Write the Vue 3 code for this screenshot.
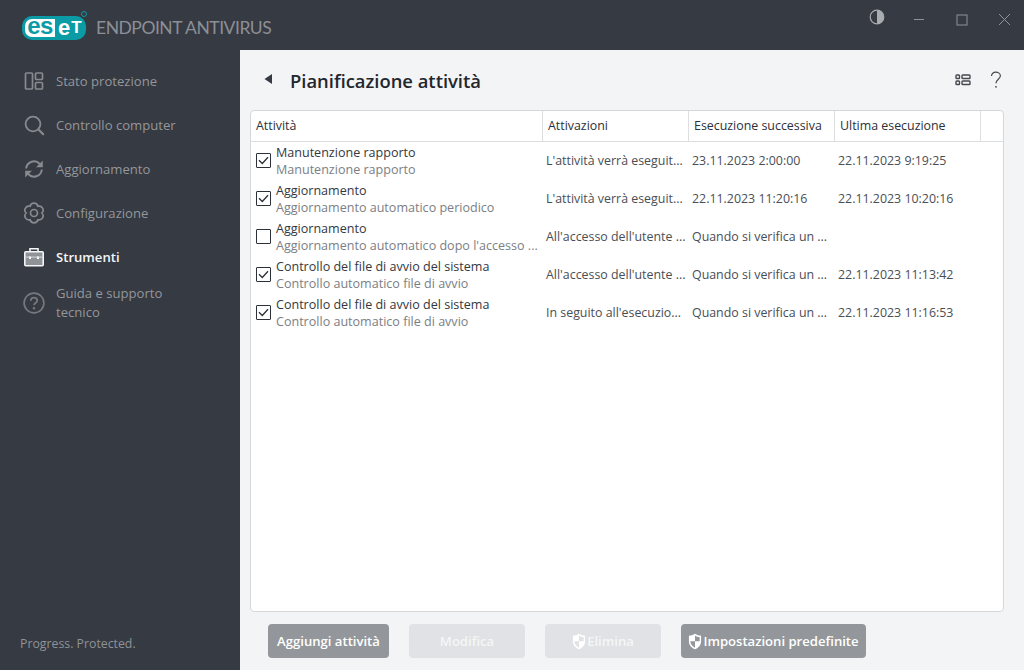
<script setup>
const nav = [
  { id: 'stato', label: 'Stato protezione' },
  { id: 'search', label: 'Controllo computer' },
  { id: 'sync', label: 'Aggiornamento' },
  { id: 'gear', label: 'Configurazione' },
  { id: 'tools', label: 'Strumenti', active: true },
  { id: 'help', label: 'Guida e supporto tecnico', tall: true }
]
const columns = ['Attività', 'Attivazioni', 'Esecuzione successiva', 'Ultima esecuzione', '']
const rows = [
  { on: true, title: 'Manutenzione rapporto', sub: 'Manutenzione rapporto', trig: "L'attività verrà eseguit...", next: '23.11.2023 2:00:00', last: '22.11.2023 9:19:25' },
  { on: true, title: 'Aggiornamento', sub: 'Aggiornamento automatico periodico', trig: "L'attività verrà eseguit...", next: '22.11.2023 11:20:16', last: '22.11.2023 10:20:16' },
  { on: false, title: 'Aggiornamento', sub: "Aggiornamento automatico dopo l'accesso ...", trig: "All'accesso dell'utente ...", next: 'Quando si verifica un ...', last: '' },
  { on: true, title: 'Controllo del file di avvio del sistema', sub: 'Controllo automatico file di avvio', trig: "All'accesso dell'utente ...", next: 'Quando si verifica un ...', last: '22.11.2023 11:13:42' },
  { on: true, title: 'Controllo del file di avvio del sistema', sub: 'Controllo automatico file di avvio', trig: "In seguito all'esecuzio...", next: 'Quando si verifica un ...', last: '22.11.2023 11:16:53' }
]
const buttons = [
  { label: 'Aggiungi attività', width: 121 },
  { label: 'Modifica', width: 116, off: true },
  { label: 'Elimina', width: 116, off: true, shield: true },
  { label: 'Impostazioni predefinite', width: 185, shield: true }
]
</script>

<template>
  <div class="app">
    <header class="titlebar">
      <div class="brand">
        <div class="logo">
          <span class="logo-es">es</span>
          <span class="logo-e">e</span>
          <span class="logo-t">T</span>
          <i class="reg"></i>
        </div>
        <span class="product">ENDPOINT ANTIVIRUS</span>
      </div>
      <div class="winctl">
        <svg class="ctl-contrast" width="16" height="16" viewBox="0 0 16 16"><circle cx="8" cy="8" r="6.800" fill="none" stroke="#a9acb0" stroke-width="1.200"/><path d="M8 1.200a6.800 6.800 0 0 1 0 13.600z" fill="#a9acb0"/></svg>
        <svg class="ctl-min" width="12" height="12" viewBox="0 0 12 12"><path d="M1 6.500h10" stroke="#8f9297" stroke-width="1"/></svg>
        <svg class="ctl-max" width="12" height="12" viewBox="0 0 12 12"><rect x="1" y="1" width="10" height="10" fill="none" stroke="#8f9297" stroke-width="1"/></svg>
        <svg class="ctl-close" width="13" height="13" viewBox="0 0 13 13"><path d="M1 1l11 11M12 1L1 12" stroke="#8f9297" stroke-width="1"/></svg>
      </div>
    </header>

    <div class="body">
      <aside class="sidebar">
        <nav class="nav">
          <div v-for="item in nav" :key="item.id" class="nav-item" :class="{ active: item.active, tall: item.tall }">
            <span class="nav-icon">
              <svg v-if="item.id === 'stato'" width="22" height="22" viewBox="0 0 22 22" fill="none" stroke="currentColor" stroke-width="1.700"><rect x="2.500" y="3" width="7" height="16" rx="1"/><rect x="12.500" y="3" width="7" height="6.500" rx="1"/><rect x="12.500" y="12.500" width="7" height="6.500" rx="1"/></svg>
              <svg v-else-if="item.id === 'search'" width="22" height="22" viewBox="0 0 22 22" fill="none" stroke="currentColor" stroke-width="1.800"><circle cx="10" cy="10" r="7.400"/><path d="M15.500 15.500l4.700 4.700" stroke-width="2.200" stroke-linecap="round"/></svg>
              <svg v-else-if="item.id === 'sync'" width="22" height="22" viewBox="0 0 22 22"><path d="M3.200 10.500A7.800 7.800 0 0 1 16.800 6" fill="none" stroke="currentColor" stroke-width="2"/><path d="M19.800 2.500v6.800H13z" fill="currentColor"/><path d="M18.800 11.500A7.800 7.800 0 0 1 5.200 16" fill="none" stroke="currentColor" stroke-width="2"/><path d="M2.200 19.500v-6.800H9z" fill="currentColor"/></svg>
              <svg v-else-if="item.id === 'gear'" width="22" height="22" viewBox="0 0 22 22" fill="none" stroke="currentColor" stroke-width="1.700"><path d="M14.900 4.250A4 4 0 0 1 18.800 11A4 4 0 0 1 14.900 17.750A4 4 0 0 1 7.100 17.750A4 4 0 0 1 3.200 11A4 4 0 0 1 7.100 4.250A4 4 0 0 1 14.900 4.250z"/><circle cx="11" cy="11" r="3.500"/></svg>
              <svg v-else-if="item.id === 'tools'" width="22" height="22" viewBox="0 0 22 22"><path d="M7 5.500V2.800h8v2.700" fill="none" stroke="#f4f5f6" stroke-width="1.600"/><rect x="1.800" y="5.800" width="18.400" height="14" rx="1" fill="#8f9297" stroke="#f4f5f6" stroke-width="1.600"/><path d="M2 10.500h18v1.200H2z" fill="#cfd1d3"/><path d="M6 10.500h2v2.500H6zM14 10.500h2v2.500h-2z" fill="#f4f5f6"/></svg>
              <svg v-else class="help" width="22" height="22" viewBox="0 0 22 22" fill="none" stroke="currentColor" stroke-width="1.700"><circle cx="11" cy="11" r="9.900"/><path d="M7.800 8.700c0-1.900 1.400-3.100 3.200-3.100s3.200 1.200 3.200 2.900c0 2.400-3.200 2.600-3.200 4.800" stroke-width="1.800"/><circle cx="11" cy="16.200" r="1.200" fill="currentColor" stroke="none"/></svg>
            </span>
            <span class="nav-label">{{ item.label }}</span>
          </div>
        </nav>
        <div class="slogan">Progress. Protected.</div>
      </aside>

      <main class="main">
        <div class="head">
          <svg class="back" width="10" height="12" viewBox="0 0 10 12"><path d="M9 1v10L1.500 6z" fill="#363a42"/></svg>
          <h1 class="title">Pianificazione attività</h1>
          <svg class="view" width="16" height="14" viewBox="0 0 16 14" fill="none" stroke="#44484f" stroke-width="1.400"><rect x="1" y="2" width="3.500" height="3.500" rx=".8"/><rect x="1" y="8" width="3.500" height="3.500" rx=".8"/><rect x="7" y="2" width="8" height="3.500" rx=".8"/><rect x="7" y="8" width="8" height="3.500" rx=".8"/></svg>
          <svg class="q" width="12" height="18" viewBox="0 0 12 18" fill="none" stroke="#44484f" stroke-width="1.200"><path d="M1.500 5c0-2.300 2-3.800 4.300-3.800S10.400 2.700 10.400 4.800c0 3.200-4.400 3.700-4.400 7.400"/><circle cx="6" cy="15.800" r=".9" fill="#44484f" stroke="none"/></svg>
        </div>

        <section class="table">
          <div class="thead">
            <div v-for="(c, i) in columns" :key="i" class="th">{{ c }}</div>
          </div>
          <div class="tbody">
            <div v-for="(r, i) in rows" :key="i" class="tr">
              <div class="task">
                <span class="check">
                  <svg v-if="r.on" width="11" height="9" viewBox="0 0 11 9"><path d="M1 4.200l3.300 3.300L10 1.200" fill="none" stroke="#2c3038" stroke-width="1.300"/></svg>
                </span>
                <div class="task-text">
                  <div class="t1">{{ r.title }}</div>
                  <div class="t2">{{ r.sub }}</div>
                </div>
              </div>
              <div class="cell">{{ r.trig }}</div>
              <div class="cell">{{ r.next }}</div>
              <div class="cell">{{ r.last }}</div>
            </div>
          </div>
        </section>

        <footer class="actions">
          <button v-for="b in buttons" :key="b.label" class="btn" :class="{ off: b.off }" :style="{ width: b.width + 'px' }">
            <svg v-if="b.shield" class="shield" width="14" height="17" viewBox="0 0 13 16"><path d="M6.500.8c1.700 1.200 3.600 1.800 5.700 1.900v5c0 3.600-2.300 6.200-5.700 7.500C3.100 13.900.8 11.300.8 7.700v-5C2.900 2.600 4.800 2 6.500.8z" fill="#fff"/><path d="M6.500 2.300v5.500H2.100c.1 2.800 1.900 4.800 4.400 6V7.800h4.400V3.900C9.300 3.800 7.800 3.200 6.500 2.300z" :fill="b.off ? '#e0e2e5' : '#93979b'"/></svg>
            <span>{{ b.label }}</span>
          </button>
        </footer>
      </main>
    </div>
  </div>
</template>

<style scoped>
.app { width: 1024px; height: 670px; display: flex; flex-direction: column; overflow: hidden; font-family: "Open Sans", "Noto Sans", sans-serif; background: #363a42; }
.titlebar { height: 50px; flex: none; display: flex; justify-content: space-between; background: #363a42; }
.brand { display: flex; align-items: center; padding: 5px 0 0 22px; height: 50px; box-sizing: border-box; }
.logo { position: relative; width: 64px; height: 24px; border-radius: 10px; background: #0a9ba5; display: flex; align-items: center; font-family: "Liberation Sans", sans-serif; font-weight: 700; box-sizing: border-box; padding-left: 3px; }
.logo-es { width: 30px; height: 18px; background: #fff; color: #0a9ba5; border-radius: 7px 0 0 7px; font-size: 24px; line-height: 14px; letter-spacing: -.5px; text-align: center; }
.logo-e { width: 14px; margin-left: 2px; color: #fff; font-size: 22px; line-height: 20px; text-align: center; }
.logo-t { width: 11px; color: #fff; font-size: 17px; line-height: 20px; text-align: center; }
.reg { position: absolute; right: -1px; top: -5px; width: 4px; height: 4px; border: 1px solid #0a9ba5; border-radius: 50%; }
.product { margin-left: 10px; font-family: Lato, sans-serif; font-size: 17.500px; letter-spacing: -.47px; color: #8c8f96; }
.winctl { display: flex; align-items: flex-start; padding-top: 9px; }
.ctl-contrast { margin-right: 28px; }
.ctl-min { margin-right: 31px; margin-top: 4px; }
.ctl-max { margin-right: 30px; margin-top: 5px; }
.ctl-close { margin-right: 13px; margin-top: 4px; }
.body { flex: 1; display: flex; min-height: 0; }
.sidebar { width: 240px; flex: none; display: flex; flex-direction: column; justify-content: space-between; color: #8f9297; }
.nav { display: flex; flex-direction: column; padding-top: 9px; }
.nav-item { display: flex; align-items: center; height: 44px; padding-left: 23px; font-size: 13.100px; color: #94979b; }
.nav-item.tall { height: 56px; margin-top: -4px; }
.nav-item.active { color: #f4f5f6; font-weight: 600; }
.nav-icon { width: 22px; height: 22px; margin-right: 11px; flex: none; display: block; color: #878a8f; }
.nav-icon svg { display: block; }
.nav-icon .help { color: #75787d; }
.nav-label { width: 130px; line-height: 19px; }
.slogan { padding: 0 0 18px 20px; font-size: 12.300px; color: #8f9297; line-height: 16px; }
.main { flex: 1; min-width: 0; background: #f3f4f6; display: flex; flex-direction: column; }
.head { height: 60px; flex: none; display: flex; align-items: center; padding: 0 22px 0 23px; }
.back { margin-right: 17px; margin-top: -3px; }
.title { margin: 2px 0 0; font-size: 18.400px; font-weight: 600; color: #23262c; flex: 1; line-height: 24px; }
.view { margin-right: 19px; }
.table { margin-left: 10px; margin-right: 20px; height: 502px; flex: none; box-sizing: border-box; background: #fff; border: 1px solid #d5d7da; border-radius: 4px; overflow: hidden; }
.thead { display: grid; grid-template-columns: 292px 146px 146px 146px 1fr; height: 30px; border-bottom: 1px solid #dcdee0; }
.th { font-size: 12.400px; color: #2c3038; line-height: 30px; padding-left: 5px; border-right: 1px solid #dcdee0; white-space: nowrap; }
.th:last-child { border-right: none; }
.tbody { display: flex; flex-direction: column; }
.tr { display: grid; grid-template-columns: 292px 146px 146px 146px; height: 38px; align-items: center; font-size: 12.400px; }
.task { display: flex; align-items: center; padding-left: 5px; }
.check { width: 13px; height: 13px; border: 1px solid #2c3038; border-radius: 1px; display: flex; align-items: center; justify-content: center; margin: -2px 5px 0 0; background: #fff; }
.t1 { line-height: 17px; font-size: 12.550px; color: #33373e; white-space: nowrap; }
.t2 { line-height: 17px; font-size: 12.550px; color: #7b7e84; white-space: nowrap; }
.cell { padding-left: 3px; color: #4a4e55; white-space: nowrap; margin-top: -1px; }
.actions { flex: 1; display: flex; gap: 20px; padding: 12px 0 0 28px; }
.btn { height: 34px; box-sizing: border-box; border: none; border-radius: 4px; background: #93979b; color: #fff; font-family: inherit; font-size: 13.100px; font-weight: 600; display: flex; align-items: center; justify-content: center; padding: 0; white-space: nowrap; }
.shield { margin-right: 1px; }
.btn.off { background: #e0e2e5; color: #f5f6f7; }
</style>
